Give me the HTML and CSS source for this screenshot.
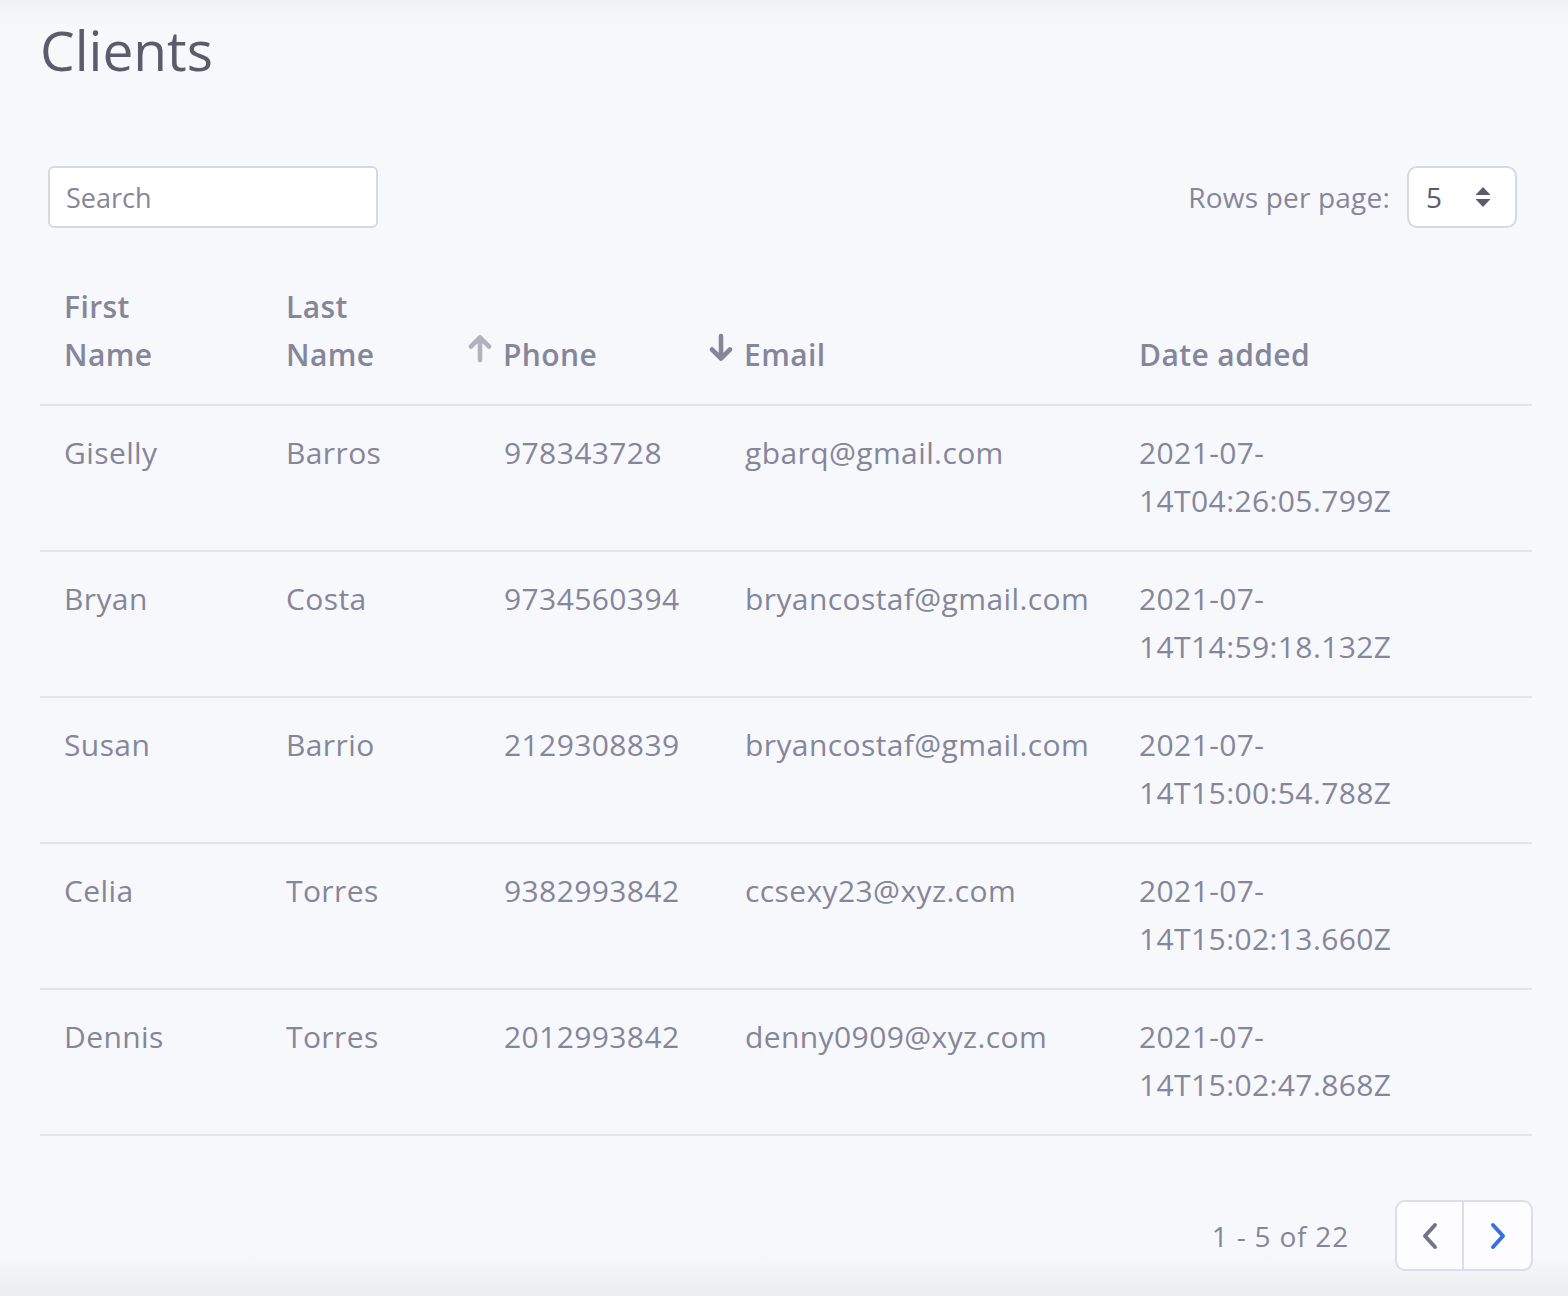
FILE: index.html
```html
<!DOCTYPE html>
<html lang="en">
<head>
<meta charset="utf-8">
<title>Clients</title>
<link rel="stylesheet" href="styles.css">
</head>
<body>
<div class="page">
  <h1 class="title">Clients</h1>

  <div class="toolbar">
    <input class="search" type="text" placeholder="Search">
    <div class="rpp">
      <span class="rpp-label">Rows per page:</span>
      <div class="select">
        <span class="select-value">5</span>
        <svg class="select-arrows" width="16" height="22" viewBox="0 0 16 22"><path d="M8 1 L15.5 9 H0.5 Z M8 21 L15.5 13 H0.5 Z" fill="#5b5c6c"/></svg>
      </div>
    </div>
  </div>

  <table class="grid">
    <colgroup>
      <col class="c1"><col class="c2"><col class="c3"><col class="c4"><col class="c5">
    </colgroup>
    <thead>
      <tr>
        <th><span class="wrap-head">First Name</span></th>
        <th><span class="wrap-head">Last Name</span></th>
        <th><svg class="sort sort-up" width="28" height="30" viewBox="0 0 28 30"><path d="M14 27 V5 M5 13.5 L14 4.5 L23 13.5" fill="none" stroke="currentColor" stroke-width="4.6" stroke-linecap="round" stroke-linejoin="round"/></svg>Phone</th>
        <th><svg class="sort sort-down" width="28" height="30" viewBox="0 0 28 30"><path d="M14 3 V25 M5 16.5 L14 25.5 L23 16.5" fill="none" stroke="currentColor" stroke-width="4.6" stroke-linecap="round" stroke-linejoin="round"/></svg>Email</th>
        <th>Date added</th>
      </tr>
    </thead>
    <tbody>
      <tr><td>Giselly</td><td>Barros</td><td>978343728</td><td>gbarq@gmail.com</td><td class="date">2021-07-14T04:26:05.799Z</td></tr>
      <tr><td>Bryan</td><td>Costa</td><td>9734560394</td><td>bryancostaf@gmail.com</td><td class="date">2021-07-14T14:59:18.132Z</td></tr>
      <tr><td>Susan</td><td>Barrio</td><td>2129308839</td><td>bryancostaf@gmail.com</td><td class="date">2021-07-14T15:00:54.788Z</td></tr>
      <tr><td>Celia</td><td>Torres</td><td>9382993842</td><td>ccsexy23@xyz.com</td><td class="date">2021-07-14T15:02:13.660Z</td></tr>
      <tr><td>Dennis</td><td>Torres</td><td>2012993842</td><td>denny0909@xyz.com</td><td class="date">2021-07-14T15:02:47.868Z</td></tr>
    </tbody>
  </table>

  <div class="footer">
    <span class="range">1 - 5 of 22</span>
    <div class="pager">
      <button class="pg-btn prev" type="button"><svg width="20" height="28" viewBox="0 0 20 28"><path d="M15 3 L5 14 L15 25" fill="none" stroke="currentColor" stroke-width="4" stroke-linecap="round" stroke-linejoin="round"/></svg></button>
      <button class="pg-btn next" type="button"><svg width="20" height="28" viewBox="0 0 20 28"><path d="M5 3 L15 14 L5 25" fill="none" stroke="currentColor" stroke-width="4" stroke-linecap="round" stroke-linejoin="round"/></svg></button>
    </div>
  </div>
</div>
</body>
</html>
```

FILE: styles.css
```css
html, body {
  margin: 0;
  padding: 0;
}

body {
  background: #f7f8fc;
  font-family: "Open Sans", "Noto Sans", "Liberation Sans", sans-serif;
  color: #85869a;
}

.page {
  box-sizing: border-box;
  min-height: 1296px;
  padding: 14px 36px 0 40px;
  background: linear-gradient(to bottom, #f1f2f6 0px, #f7f8fc 26px, #f7f8fc 1256px, #ebecf0 1296px);
}

.title {
  margin: 0;
  font-size: 55px;
  font-weight: 400;
  line-height: 72px;
  color: #5a5b6b;
}

.toolbar {
  display: flex;
  align-items: center;
  justify-content: space-between;
  margin-top: 80px;
  padding: 0 15px 0 8px;
}

.search {
  box-sizing: border-box;
  width: 330px;
  height: 62px;
  border: 2px solid #d7d8e6;
  border-radius: 6px;
  background: #ffffff;
  padding: 0 16px;
  font-family: inherit;
  font-size: 27px;
  color: #5a5b6b;
  outline: none;
}

.search::placeholder {
  color: #85869a;
}

.rpp {
  display: flex;
  align-items: center;
  gap: 17px;
}

.rpp-label {
  font-size: 28px;
  letter-spacing: 0.2px;
}

.select {
  box-sizing: border-box;
  width: 110px;
  height: 62px;
  border: 2px solid #d7d8e6;
  border-radius: 10px;
  background: #ffffff;
  display: flex;
  align-items: center;
  justify-content: space-between;
  padding: 0 24px 0 17px;
}

.select-value {
  font-size: 28px;
  color: #5a5b6b;
}

.grid {
  margin-top: 30px;
  width: 1492px;
  border-collapse: collapse;
  table-layout: fixed;
}

.c1 { width: 222px; }
.c2 { width: 218px; }
.c3 { width: 241px; }
.c4 { width: 394px; }
.c5 { width: 417px; }

.grid th,
.grid td {
  text-align: left;
  vertical-align: bottom;
  padding: 23px 0 25px 24px;
  font-size: 30px;
  letter-spacing: 0.4px;
  line-height: 48px;
  border-bottom: 2px solid #e3e4ea;
}

.grid th {
  padding-top: 25px;
  font-weight: 600;
  color: #85869a;
  white-space: nowrap;
}

.grid td {
  vertical-align: top;
  font-weight: 400;
}

.grid td.date {
  padding-right: 70px;
}

.wrap-head {
  display: inline-block;
  width: 100px;
  white-space: normal;
}

.sort {
  display: inline-block;
  vertical-align: top;
  margin: 2px 9px 0 -38px;
}

.sort-up { color: #b1b2bd; }
.sort-down { color: #85869a; }

.footer {
  display: flex;
  align-items: center;
  justify-content: flex-end;
  gap: 46px;
  margin-top: 64px;
  width: 1493px;
}

.range {
  font-size: 28px;
  letter-spacing: 0.8px;
}

.pager {
  display: flex;
  border: 2px solid #dcdde8;
  border-radius: 10px;
  background: #fdfdff;
  overflow: hidden;
}

.pg-btn {
  width: 67px;
  height: 67px;
  border: none;
  background: transparent;
  padding: 0;
  display: flex;
  align-items: center;
  justify-content: center;
}

.pg-btn.prev {
  border-right: 2px solid #dcdde8;
  color: #737485;
}

.pg-btn.next {
  color: #3a6fdf;
}
```
